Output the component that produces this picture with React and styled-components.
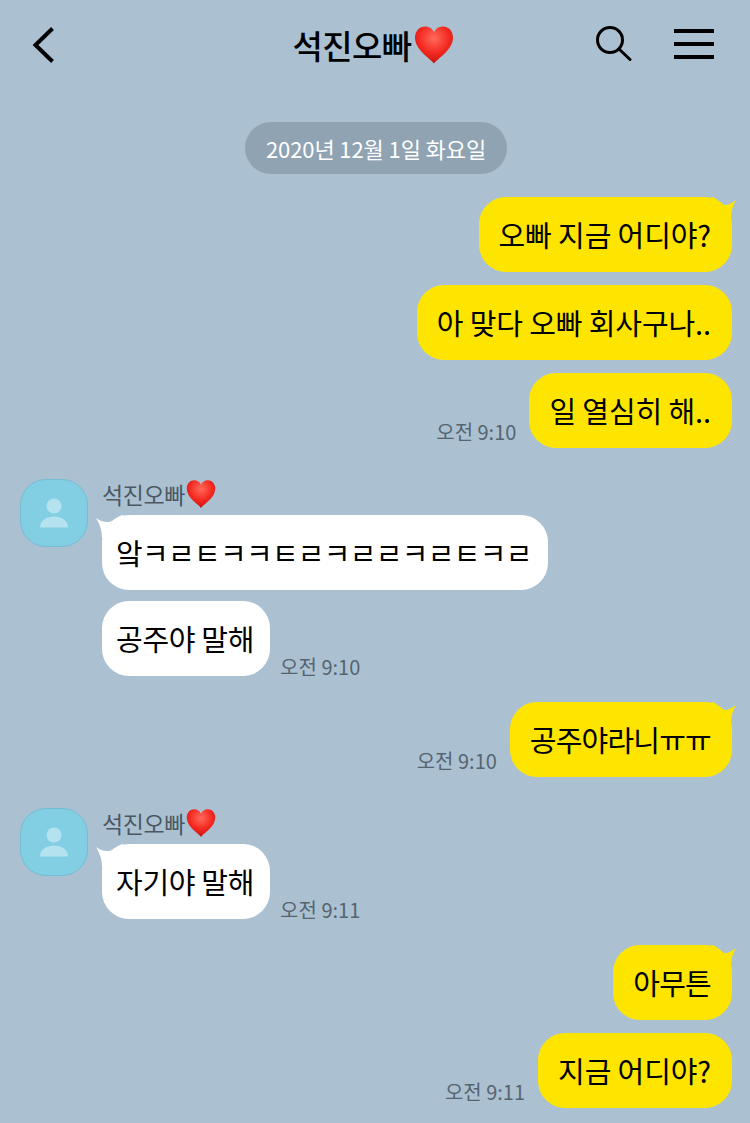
import styled, { createGlobalStyle } from "styled-components";

const GlobalStyle = createGlobalStyle`
    html, body {
        margin: 0;
        padding: 0;
        background: #abc1d2;
    }
`;

const Page = styled.div`
    width: 750px;
    height: 1123px;
    overflow: hidden;
    background: #abc1d2;
    font-family: "Noto Sans CJK KR", "Noto Sans", sans-serif;
    color: #000;
`;

const Header = styled.div`
    height: 90px;
    padding: 0 36px 0 32px;
    display: grid;
    grid-template-columns: 1fr auto 1fr;
    align-items: center;
`;

const HeaderTitle = styled.div`
    display: flex;
    align-items: center;
    gap: 2px;
    font-size: 33px;
    font-weight: 500;
    letter-spacing: -0.6px;
`;

const HeaderActions = styled.div`
    display: flex;
    align-items: center;
    justify-content: flex-end;
    gap: 42px;
`;

const Feed = styled.div`
    display: flex;
    flex-direction: column;
    gap: 26px;
    padding: 0 18px 0 20px;
`;

const DateRow = styled.div`
    display: flex;
    justify-content: center;
    margin: 32px 0 -3px;
`;

const DatePill = styled.div`
    height: 52px;
    padding: 0 21px;
    display: flex;
    align-items: center;
    border-radius: 26px;
    background: #8fa3b2;
    color: #fff;
    font-size: 22px;
    letter-spacing: -0.1px;
`;

const SentGroup = styled.div`
    display: flex;
    flex-direction: column;
    align-items: flex-end;
    gap: 13px;
`;

const ReceivedGroup = styled.div`
    margin-top: 5px;
    display: flex;
    gap: 14px;
`;

const Avatar = styled.div`
    width: 68px;
    height: 68px;
    box-sizing: border-box;
    flex-shrink: 0;
    display: flex;
    align-items: center;
    justify-content: center;
    border-radius: 26px;
    border: 1px solid #74bdd3;
    background: #82cee3;
`;

const ReceivedBody = styled.div`
    display: flex;
    flex-direction: column;
    align-items: flex-start;
    gap: 11px;
`;

const SenderName = styled.div`
    height: 25px;
    padding-top: 4px;
    box-sizing: border-box;
    display: flex;
    align-items: center;
    gap: 1px;
    font-size: 23px;
    letter-spacing: -0.4px;
    color: #4a5862;
`;

const Line = styled.div`
    display: flex;
    align-items: flex-end;
    flex-direction: ${(p) => (p.$sent ? "row-reverse" : "row")};
    gap: ${(p) => (p.$sent ? "13px" : "10px")};
`;

const Bubble = styled.div`
    position: relative;
    height: 75px;
    box-sizing: border-box;
    padding: ${(p) => (p.$sent ? "0 21px 2px 20px" : "0 16px 2px 14px")};
    display: flex;
    align-items: center;
    border-radius: 27px;
    background: ${(p) => (p.$sent ? "#fee500" : "#fff")};
    font-size: 29px;
    letter-spacing: ${(p) => p.$spacing ?? (p.$sent ? -0.1 : -0.3)}px;
    white-space: nowrap;
`;

const Tail = styled.svg`
    position: absolute;
    top: 0;
    ${(p) => (p.$sent ? "right: -5px;" : "left: -6px;")}
`;

const Time = styled.div`
    margin-bottom: ${(p) => (p.$sent ? "2px" : "-5px")};
    font-size: 20px;
    line-height: 28px;
    color: #56646f;
    white-space: nowrap;
`;

function Heart({ size }) {
    return (
        <svg width={size} height={size} viewBox="0 0 40 40">
            <defs>
                <radialGradient id="heartFill" cx="0.5" cy="0.32" r="0.68">
                    <stop offset="0" stopColor="#ff6a5c" />
                    <stop offset="0.6" stopColor="#f3281f" />
                    <stop offset="1" stopColor="#c71512" />
                </radialGradient>
            </defs>
            <path
                d="M20 38.500C16 33 1 25 1 12.500 1 6 5.500 1.500 11 1.500c4 0 7.500 2 9 6 1.500-4 5-6 9-6 5.500 0 10 4.500 10 11C39 25 24 33 20 38.500z"
                fill="url(#heartFill)"
            />
        </svg>
    );
}

function Message({ sent, time, first, spacing, children }) {
    return (
        <Line $sent={sent}>
            <Bubble $sent={sent} $spacing={spacing}>
                {first && sent && (
                    <Tail $sent width="26" height="24" viewBox="0 0 26 24">
                        <path d="M1 0C6 1 9 7 13 8 17 8.500 21 6 25 3 22 8 20 14 20 23L1 23z" fill="#fee500" />
                    </Tail>
                )}
                {first && !sent && (
                    <Tail width="28" height="24" viewBox="0 0 28 24">
                        <path d="M27 0C21 1 18 6 13 7 8 7.500 4 6 0 3 3 8 6 14 6 23L27 23z" fill="#fff" />
                    </Tail>
                )}
                {children}
            </Bubble>
            {time && <Time $sent={sent}>{time}</Time>}
        </Line>
    );
}

function Received({ children }) {
    return (
        <ReceivedGroup>
            <Avatar>
                <svg width="28" height="30" viewBox="0 0 28 30">
                    <circle cx="14" cy="8" r="7.500" fill="#b4e3ef" />
                    <path d="M0 29.500C0 22 7 18.500 14 18.500S28 22 28 29.500z" fill="#b4e3ef" />
                </svg>
            </Avatar>
            <ReceivedBody>
                <SenderName>석진오빠<Heart size={30} /></SenderName>
                {children}
            </ReceivedBody>
        </ReceivedGroup>
    );
}

export default function App() {
    return (
        <Page>
            <GlobalStyle />
            <Header>
                <svg width="24" height="40" viewBox="0 0 24 40">
                    <polyline points="20.500,3.500 3.500,20 20.500,36.500" fill="none" stroke="#000" strokeWidth="4" />
                </svg>
                <HeaderTitle>석진오빠<Heart size={40} /></HeaderTitle>
                <HeaderActions>
                    <svg width="36" height="38" viewBox="0 0 36 38">
                        <circle cx="14" cy="14" r="12.500" fill="none" stroke="#000" strokeWidth="3" />
                        <line x1="23" y1="23" x2="34" y2="33.500" stroke="#000" strokeWidth="3" strokeLinecap="round" />
                    </svg>
                    <svg width="40" height="32" viewBox="0 0 40 32">
                        <rect y="0" width="40" height="4" />
                        <rect y="13" width="40" height="4" />
                        <rect y="26" width="40" height="4" />
                    </svg>
                </HeaderActions>
            </Header>
            <Feed>
                <DateRow><DatePill>2020년 12월 1일 화요일</DatePill></DateRow>
                <SentGroup>
                    <Message sent first>오빠 지금 어디야?</Message>
                    <Message sent>아 맞다 오빠 회사구나..</Message>
                    <Message sent time="오전 9:10">일 열심히 해..</Message>
                </SentGroup>
                <Received>
                    <Message first spacing={-0.7}>앜ㅋㄹㅌㅋㅋㅌㄹㅋㄹㄹㅋㄹㅌㅋㄹ</Message>
                    <Message time="오전 9:10">공주야 말해</Message>
                </Received>
                <SentGroup>
                    <Message sent first time="오전 9:10" spacing={-0.8}>공주야라니ㅠㅠ</Message>
                </SentGroup>
                <Received>
                    <Message first time="오전 9:11">자기야 말해</Message>
                </Received>
                <SentGroup>
                    <Message sent first spacing={-0.8}>아무튼</Message>
                    <Message sent time="오전 9:11">지금 어디야?</Message>
                </SentGroup>
            </Feed>
        </Page>
    );
}
